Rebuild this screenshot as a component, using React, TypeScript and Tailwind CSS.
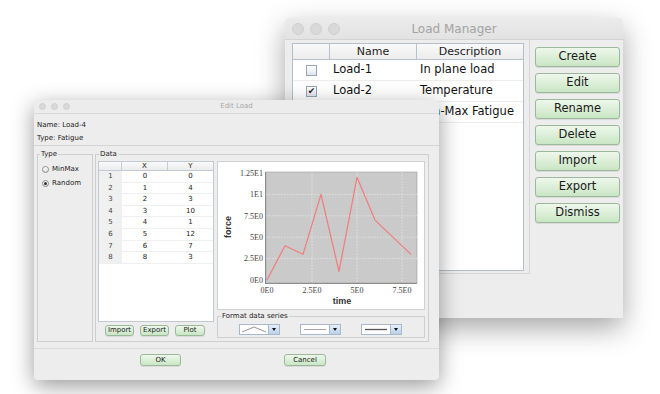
const ui = { fontFamily: '"DejaVu Sans", "Liberation Sans", sans-serif' };

const TrafficLights = ({ size, gap }: { size: string; gap: string }) => (
  <div className={`flex ${gap}`}>
    {[0, 1, 2].map((i) => (
      <span key={i} className={`${size} rounded-full bg-[#d9d9d9] border border-[#cfcfcf]`} />
    ))}
  </div>
);

const GreenButton = ({ label, className }: { label: string; className: string }) => (
  <button
    className={`flex items-center justify-center rounded-[3px] border border-[#9cb89a] bg-gradient-to-b from-[#eef8ec] to-[#c9e6c4] text-[#1a1a1a] shadow-[0_1px_0_rgba(0,0,0,0.08)] ${className}`}
  >
    {label}
  </button>
);

const loads = [
  { name: "Load-1", desc: "In plane load", checked: false },
  { name: "Load-2", desc: "Temperature", checked: true },
  { name: "Load-3", desc: "Min-Max Fatigue", checked: false },
];

const LoadManager = () => (
  <div
    className="absolute left-[285px] top-[18px] w-[338px] h-[300px] bg-[#ededed] rounded-t-[5px] shadow-[0_10px_28px_rgba(0,0,0,0.35)] flex flex-col"
    style={ui}
  >
    <div className="relative h-[22px] flex items-center px-[7px] rounded-t-[5px] bg-gradient-to-b from-[#ececec] to-[#e2e2e2] border-b border-[#d3d3d3]">
      <TrafficLights size="w-[12px] h-[12px]" gap="gap-[6px]" />
      <span className="absolute inset-0 flex items-center justify-center text-[12px] text-[#a3a3a3]">Load Manager</span>
    </div>
    <div className="flex flex-1">
      <div className="w-[240px] h-[234px] ml-[5px] border-r border-b border-[#d6d6d6] pt-[3px] pl-[2px]">
        <div className="w-[232px] h-[228px] bg-white border border-[#b5bdc7]">
          <div className="flex h-[16px] items-stretch text-[11px] leading-[16px] text-[#222] bg-gradient-to-b from-[#fafafa] to-[#ececec] border-b border-[#b5c2d0]">
            <div className="w-[37px] border-r border-[#b5c2d0]" />
            <div className="w-[87px] text-center border-r border-[#b5c2d0]">Name</div>
            <div className="flex-1 text-center">Description</div>
          </div>
          {loads.map((l) => (
            <div key={l.name} className="flex h-[21px] items-center text-[11.5px] text-[#111] border-b border-[#ececec]">
              <div className="w-[37px] flex justify-center">
                <span className="w-[11px] h-[11px] border border-[#98a4b2] bg-gradient-to-b from-white to-[#dfe6ee] flex items-center justify-center text-[9px] leading-none text-[#222]">
                  {l.checked ? "✔" : ""}
                </span>
              </div>
              <div className="w-[87px] pl-[3px]">{l.name}</div>
              <div className="flex-1 pl-[3px]">{l.desc}</div>
            </div>
          ))}
        </div>
      </div>
      <div className="flex flex-col gap-[6px] ml-[5px] pt-[7px]">
        {["Create", "Edit", "Rename", "Delete", "Import", "Export", "Dismiss"].map((b) => (
          <GreenButton key={b} label={b} className="w-[85px] h-[20px] text-[11.5px]" />
        ))}
      </div>
    </div>
  </div>
);

const dataRows = [
  [1, 0, 0],
  [2, 1, 4],
  [3, 2, 3],
  [4, 3, 10],
  [5, 4, 1],
  [6, 5, 12],
  [7, 6, 7],
  [8, 8, 3],
];

const Chart = () => {
  const px = (x: number) => 49 + x * 18;
  const py = (y: number) => 118 - y * 8.56;
  const pts = dataRows.map((r) => `${px(r[1])},${py(r[2])}`).join(" ");
  const yTicks = [
    [0, "0E0"],
    [2.5, "2.5E0"],
    [5, "5E0"],
    [7.5, "7.5E0"],
    [10, "1E1"],
    [12.5, "1.25E1"],
  ] as const;
  const xTicks = [
    [0, "0E0"],
    [2.5, "2.5E0"],
    [5, "5E0"],
    [7.5, "7.5E0"],
  ] as const;
  return (
    <svg width="206" height="147" viewBox="0 0 206 147">
      <rect x="48" y="10" width="151" height="111" fill="#cacaca" stroke="#9a9a9a" strokeWidth="0.6" />
      {xTicks.slice(1).map(([v]) => (
        <line key={v} x1={px(v)} x2={px(v)} y1="10" y2="121" stroke="#f2f2f2" strokeWidth="0.6" strokeDasharray="1.5 1.5" />
      ))}
      {yTicks.slice(1, 5).map(([v]) => (
        <line key={v} x1="48" x2="199" y1={py(v)} y2={py(v)} stroke="#f2f2f2" strokeWidth="0.6" strokeDasharray="1.5 1.5" />
      ))}
      <line x1="47.5" x2="47.5" y1="10" y2="122" stroke="#777" strokeWidth="0.8" />
      <line x1="47" x2="199" y1="121.5" y2="121.5" stroke="#777" strokeWidth="0.8" />
      <polyline points={pts} fill="none" stroke="#f27b7b" strokeWidth="1.2" strokeLinejoin="round" />
      <g fontFamily='"Liberation Serif", serif' fontSize="8" fill="#444">
        {yTicks.map(([v, t]) => (
          <text key={t} x="45" y={py(v) + 2.8} textAnchor="end">
            {t}
          </text>
        ))}
        {xTicks.map(([v, t]) => (
          <text key={t} x={px(v)} y="131" textAnchor="middle">
            {t}
          </text>
        ))}
      </g>
      <g fontFamily='"Liberation Sans", sans-serif' fontSize="9" fontWeight="bold" fill="#333">
        <text x="124" y="142" textAnchor="middle">
          time
        </text>
        <text transform="translate(13 65) rotate(-90)" textAnchor="middle">
          force
        </text>
      </g>
    </svg>
  );
};

const Combo = ({ kind }: { kind: "peak" | "thin" | "thick" }) => (
  <div className="flex w-[41px] h-[11px] border border-[#a9b9cc] bg-white">
    <div className="flex-1 flex items-center justify-center">
      <svg width="26" height="9" viewBox="0 0 26 9">
        {kind === "peak" && <polyline points="1,7 13,2 25,7" fill="none" stroke="#666" strokeWidth="0.7" />}
        {kind === "thin" && <line x1="2" x2="24" y1="4.5" y2="4.5" stroke="#999" strokeWidth="0.9" />}
        {kind === "thick" && <line x1="2" x2="24" y1="4.5" y2="4.5" stroke="#555" strokeWidth="1.3" />}
      </svg>
    </div>
    <div className="w-[11px] flex items-center justify-center border-l border-[#a9b9cc] bg-gradient-to-b from-[#e6f0fb] to-[#b9d0ea]">
      <span className="w-0 h-0 border-l-[2.5px] border-r-[2.5px] border-t-[3px] border-l-transparent border-r-transparent border-t-[#111]" />
    </div>
  </div>
);

const Radio = ({ label, on }: { label: string; on: boolean }) => (
  <div className="flex items-center gap-[3px] h-[14px]">
    <span className="w-[7px] h-[7px] rounded-full border border-[#8c8c8c] bg-gradient-to-b from-white to-[#dedede] flex items-center justify-center">
      {on && <span className="w-[3px] h-[3px] rounded-full bg-[#333]" />}
    </span>
    <span>{label}</span>
  </div>
);

const EditLoad = () => (
  <div
    className="absolute left-[34px] top-[100px] w-[405px] h-[280px] bg-[#ededed] rounded-[4px] shadow-[0_6px_22px_rgba(0,0,0,0.4)] flex flex-col text-[7px] text-[#222]"
    style={ui}
  >
    <div className="relative h-[14px] flex items-center px-[5px] rounded-t-[4px] bg-[#ececec] border-b border-[#dadada]">
      <TrafficLights size="w-[7px] h-[7px]" gap="gap-[5px]" />
      <span className="absolute inset-0 flex items-center justify-center text-[7px] text-[#a8a8a8]">Edit Load</span>
    </div>
    <div className="pl-[3px] pt-[5px] border-b border-[#d4d4d4]">
      <div className="h-[13px] flex items-center">Name: Load-4</div>
      <div className="h-[13px] flex items-center">Type: Fatigue</div>
    </div>
    <div className="flex gap-[2px] px-[3px] pt-[4px] h-[203px] border-b border-[#dcdcdc]">
      <fieldset className="w-[56px] h-[192px] border border-[#cfcfcf] pl-[4px]">
        <legend className="px-[1px] -ml-[2px] text-[7px] leading-[8px]">Type</legend>
        <div className="pt-[4px]">
          <Radio label="MinMax" on={false} />
          <Radio label="Random" on={true} />
        </div>
      </fieldset>
      <fieldset className="w-[334px] h-[192px] border border-[#cfcfcf] pl-[2px]">
        <legend className="px-[1px] ml-[1px] text-[7px] leading-[8px]">Data</legend>
        <div className="flex gap-[3px] pt-[3px]">
          <div className="flex flex-col">
            <div className="w-[116px] h-[161px] bg-white border border-[#c2c9d2]">
              <div className="flex h-[9px] text-[7px] leading-none bg-gradient-to-b from-[#fafafa] to-[#ececec] border-b border-[#c2ccd8]">
                <div className="w-[23px] border-r border-[#c2ccd8]" />
                <div className="w-[46px] flex items-center justify-center border-r border-[#c2ccd8]">X</div>
                <div className="flex-1 flex items-center justify-center">Y</div>
              </div>
              {dataRows.map((r) => (
                <div key={r[0]} className="flex h-[11.6px] items-center text-[7px] border-b border-[#efefef]">
                  <div className="w-[23px] h-full flex items-center justify-center bg-[#f0f0f0] text-[#444]">{r[0]}</div>
                  <div className="w-[46px] flex justify-center">{r[1]}</div>
                  <div className="flex-1 flex justify-center">{r[2]}</div>
                </div>
              ))}
            </div>
            <div className="flex gap-[6px] pl-[7px] pt-[3px]">
              <GreenButton label="Import" className="w-[29px] h-[11px] text-[7px]" />
              <GreenButton label="Export" className="w-[29px] h-[11px] text-[7px]" />
              <GreenButton label="Plot" className="w-[30px] h-[11px] text-[7px]" />
            </div>
          </div>
          <div className="flex flex-col">
            <div className="w-[208px] h-[149px] bg-white border border-[#d0d0d0]">
              <Chart />
            </div>
            <fieldset className="w-[208px] h-[26px] mt-[2px] border border-[#cfcfcf]">
              <legend className="px-[1px] ml-[3px] text-[7px] leading-[8px]">Format data series</legend>
              <div className="flex gap-[20px] pl-[21px] pt-[4px]">
                <Combo kind="peak" />
                <Combo kind="thin" />
                <Combo kind="thick" />
              </div>
            </fieldset>
          </div>
        </div>
      </fieldset>
    </div>
    <div className="flex pt-[5px] pl-[106px] gap-[103px]">
      <GreenButton label="OK" className="w-[41px] h-[12px] text-[7px]" />
      <GreenButton label="Cancel" className="w-[42px] h-[12px] text-[7px]" />
    </div>
  </div>
);

export default function App() {
  return (
    <div className="relative w-[660px] h-[394px] bg-white overflow-hidden">
      <LoadManager />
      <EditLoad />
    </div>
  );
}
